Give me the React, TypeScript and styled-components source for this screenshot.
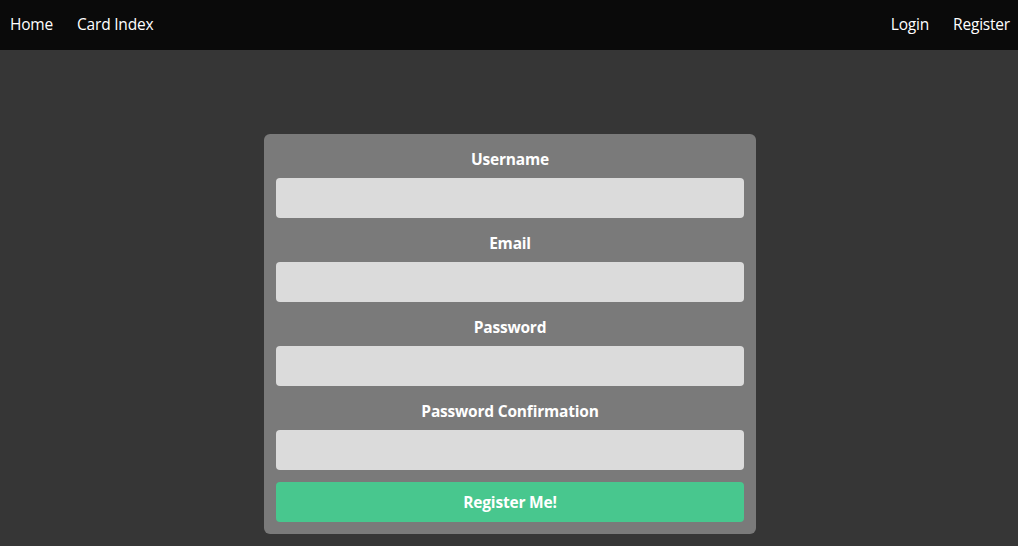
import React from "react";
import styled, { createGlobalStyle } from "styled-components";

const Global = createGlobalStyle`
  html, body { margin: 0; padding: 0; }
  body {
    background: #363636;
    font-family: "Open Sans", "Noto Sans", sans-serif;
    font-size: 15px;
    color: #ffffff;
  }
`;

const Page = styled.div`
  min-height: 546px;
  display: flex;
  flex-direction: column;
`;

const Nav = styled.nav`
  height: 50px;
  box-sizing: border-box;
  background: #0a0a0a;
  display: flex;
  align-items: center;
  justify-content: space-between;
  padding: 0 8px 2px 10px;
`;

const NavGroup = styled.div`
  display: flex;
  gap: 24px;
`;

const NavLink = styled.a`
  color: #ffffff;
  text-decoration: none;
  font-size: 15.5px;
  line-height: 24px;
  letter-spacing: -0.2px;
`;

const Main = styled.main`
  display: flex;
  justify-content: center;
  padding: 84px 0 0 2px;
`;

const Card = styled.form`
  width: 468px;
  padding: 12px;
  background: #7a7a7a;
  border-radius: 6px;
  display: flex;
  flex-direction: column;
`;

const Field = styled.div`
  display: flex;
  flex-direction: column;
  margin-bottom: 12px;
`;

const Label = styled.label`
  text-align: center;
  font-weight: 700;
  font-size: 15.5px;
  line-height: 24px;
  padding-top: 1px;
  margin-bottom: 7px;
  letter-spacing: -0.2px;
`;

const Input = styled.input`
  height: 40px;
  box-sizing: border-box;
  border: none;
  border-radius: 4px;
  background: #dbdbdb;
  padding: 0 12px;
  font-family: inherit;
  font-size: 15px;
`;

const Button = styled.button`
  height: 40px;
  border: none;
  border-radius: 4px;
  background: #48c78e;
  color: #ffffff;
  font-family: inherit;
  font-weight: 700;
  font-size: 15.5px;
  letter-spacing: -0.2px;
  padding-top: 1px;
  cursor: pointer;
`;

const fields = [
  { label: "Username", type: "text" },
  { label: "Email", type: "email" },
  { label: "Password", type: "password" },
  { label: "Password Confirmation", type: "password" },
];

export default function App() {
  return (
    <Page>
      <Global />
      <Nav>
        <NavGroup>
          <NavLink href="#">Home</NavLink>
          <NavLink href="#">Card Index</NavLink>
        </NavGroup>
        <NavGroup>
          <NavLink href="#">Login</NavLink>
          <NavLink href="#">Register</NavLink>
        </NavGroup>
      </Nav>
      <Main>
        <Card onSubmit={(e) => e.preventDefault()}>
          {fields.map((f) => (
            <Field key={f.label}>
              <Label>{f.label}</Label>
              <Input type={f.type} />
            </Field>
          ))}
          <Button type="submit">Register Me!</Button>
        </Card>
      </Main>
    </Page>
  );
}
